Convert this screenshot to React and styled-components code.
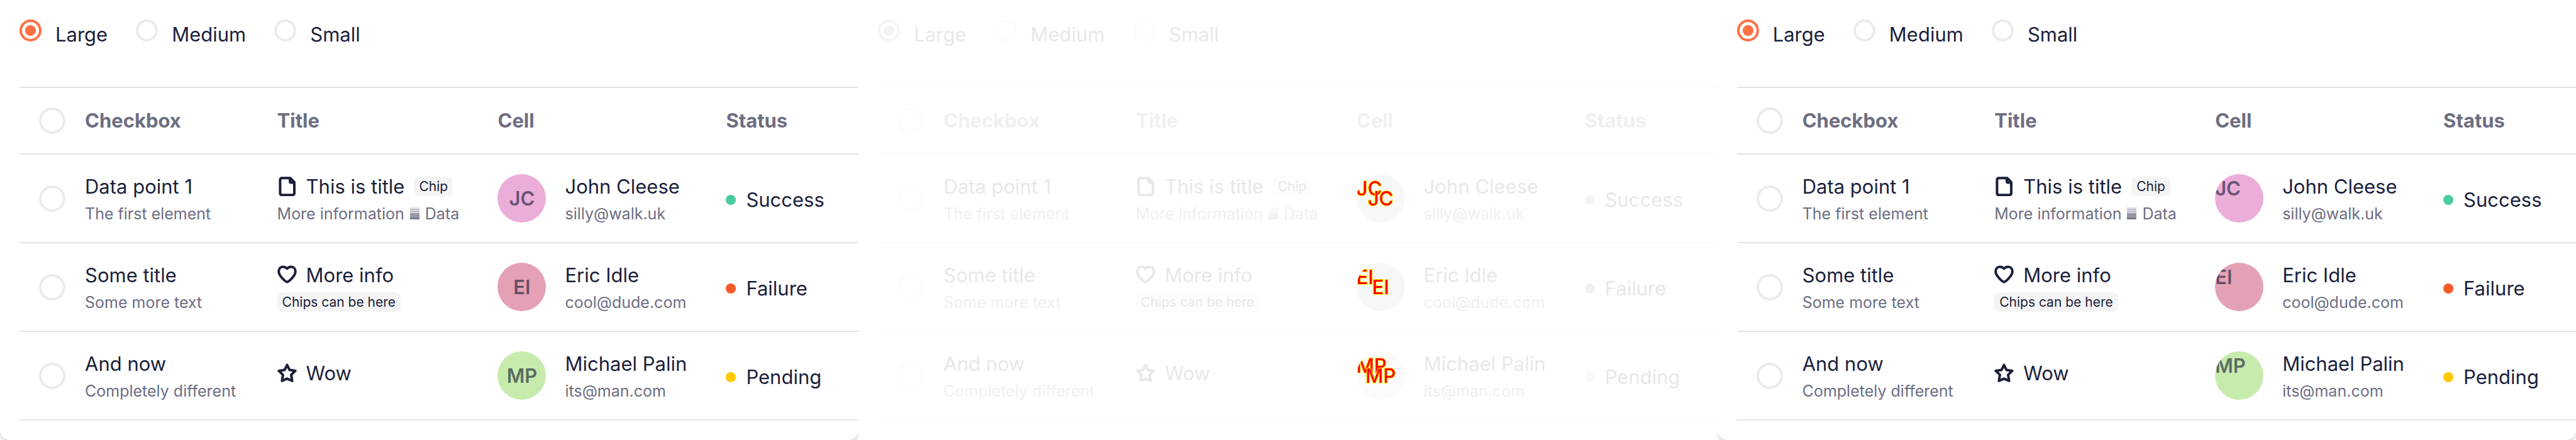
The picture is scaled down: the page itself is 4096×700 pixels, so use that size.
import React from "react";
import styled, { createGlobalStyle, ThemeProvider } from "styled-components";

const GlobalStyle = createGlobalStyle`
  *, *::before, *::after { box-sizing: border-box; }
  body { margin: 0; background: #fff; font-family: Inter, "Liberation Sans", sans-serif; }
`;

const regular = {
  text: "#1b1f3b",
  muted: "#6d6e82",
  line: "#e3e3e3",
  ring: "#ebebeb",
  accent: "#ff7043",
  chip: "#f4f4f4",
  shadow: "rgba(0, 0, 0, 0.22)",
  bars: "#6d6e82",
  avatars: ["#ebaed8", "#e4a1b5", "#c7ebac"],
  dots: ["#4bcb9b", "#f65a28", "#ffc800"],
};

const faded = {
  text: "#e8e8e8",
  muted: "#f0f0f0",
  line: "#fcfcfc",
  ring: "#fcfcfc",
  accent: "#f4f4f4",
  chip: "#fdfdfd",
  shadow: "rgba(0, 0, 0, 0.03)",
  bars: "#ececec",
  avatars: ["#f8f8f8", "#f7f7f7", "#fbfbfb"],
  dots: ["#f4f4f4", "#f1f1f1", "#f9f9f9"],
};

const Board = styled.main`
  display: grid;
  grid-template-columns: repeat(3, minmax(0, 1fr));
  min-height: 100vh;
`;

const Slot = styled.section`
  display: flex;
  overflow: hidden;
`;

const Panel = styled.div`
  flex: 1;
  min-width: 0;
  padding: 31px 0 24px 31px;
  background: #fff;
  border-radius: 0 0 16px 16px;
  box-shadow: 0 2px 8px ${(p) => p.theme.shadow};
  color: ${(p) => p.theme.text};
`;

const SizePicker = styled.div`
  display: flex;
  gap: 45px;
  margin-bottom: 59px;
`;

const SizeOption = styled.label`
  display: flex;
  align-items: flex-start;
  gap: 22px;
  font-size: 31px;
  line-height: 48px;
`;

const Radio = styled.input`
  appearance: none;
  width: 35px;
  height: 35px;
  margin: 0;
  padding: 5px;
  border: 4px solid ${(p) => p.theme.ring};
  border-radius: 50%;

  &:checked {
    border-color: ${(p) => p.theme.accent};
    background: radial-gradient(circle, ${(p) => p.theme.accent} 8px, transparent 9px);
  }
`;

const Table = styled.table`
  width: 100%;
  table-layout: fixed;
  border-collapse: separate;
  border-spacing: 0;
`;

const Col = styled.col`
  width: ${(p) => p.$width};
`;

const HeadCell = styled.th`
  height: 108px;
  padding: 0;
  border: solid ${(p) => p.theme.line};
  border-width: 2px 0;
  color: ${(p) => p.theme.muted};
  font-size: 31px;
  font-weight: 700;
  line-height: 48px;
  text-align: left;
`;

const Cell = styled.td`
  height: 141px;
  padding: 0;
  border-bottom: 2px solid ${(p) => p.theme.line};
  white-space: nowrap;
`;

const Tick = styled.input`
  appearance: none;
  display: block;
  width: 42px;
  height: 42px;
  margin: 0 0 0 31px;
  border: 4px solid ${(p) => p.theme.ring};
  border-radius: 50%;

  &:checked {
    background: ${(p) => p.theme.ring};
  }
`;

const Stack = styled.div`
  display: flex;
  flex-direction: column;
  padding-bottom: ${(p) => (p.$single ? 8 : 0)}px;
`;

const Primary = styled.div`
  display: flex;
  align-items: center;
  gap: 15px;
  font-size: 31px;
  line-height: 48px;
`;

const Secondary = styled.div`
  display: flex;
  align-items: center;
  gap: 9px;
  height: 38px;
  color: ${(p) => p.theme.muted};
  font-size: 25px;
  line-height: 38px;
`;

const Chip = styled.span`
  padding: 0 8px;
  border-radius: 8px;
  background: ${(p) => p.theme.chip};
  color: ${(p) => p.theme.text};
  font-size: 21px;
  line-height: 31px;
`;

const Icon = styled.svg`
  display: block;
  flex: none;
  width: 31px;
  height: 31px;
`;

const Bars = styled.svg`
  display: block;
  width: 15px;
  height: 19px;
  fill: ${(p) => p.theme.bars};
`;

const Person = styled.div`
  display: flex;
  align-items: center;
  gap: 30px;
`;

const Avatar = styled.div`
  position: relative;
  display: flex;
  align-items: ${(p) => (p.$centered ? "center" : "flex-start")};
  justify-content: ${(p) => (p.$centered ? "center" : "flex-start")};
  flex: none;
  width: 77px;
  height: 77px;
  border-radius: 50%;
  overflow: hidden;
  background: ${(p) => p.theme.avatars[p.$tone]};
`;

const Initials = styled.span`
  color: rgba(27, 31, 59, 0.65);
  font-size: 31px;
  font-weight: 600;
  line-height: 46px;
`;

const MarkedInitials = styled(Initials)`
  position: absolute;
  inset: 0;
  color: #f00;
  font-weight: 500;
  text-align: ${(p) => (p.$centered ? "center" : "left")};
  line-height: ${(p) => (p.$centered ? 77 : 46)}px;
  -webkit-text-stroke: 2px #ff0;
  paint-order: stroke fill;
`;

const Status = styled.div`
  display: flex;
  align-items: center;
  gap: 16px;
  padding-top: 4px;
  font-size: 31px;
  line-height: 48px;
`;

const Dot = styled.span`
  width: 16px;
  height: 16px;
  border-radius: 50%;
  background: ${(p) => p.theme.dots[p.$tone]};
`;

const shapes = {
  file: (
    <path d="M20.5 2.2H7.8Q4.4 2.2 4.4 5.6V25.9Q4.4 29.2 7.8 29.2H23.6Q27 29.2 27 25.9V8.8ZM20 3V7.4Q20 9.4 22 9.4H26.4" />
  ),
  heart: (
    <path d="M15.5 26.6C13.9 26.6 2.2 17.6 2.2 9.8C2.2 5.6 5 2.6 8.9 2.6C11.8 2.6 13.6 3.6 15.5 5.4C17.4 3.6 19.2 2.6 22.1 2.6C26 2.6 28.8 5.6 28.8 9.8C28.8 17.6 17.1 26.6 15.5 26.6Z" />
  ),
  star: (
    <path d="M15.5 2.6L19.3 10.4L28.7 11.9L22 18.4L23.6 28L15.5 24.4L7.4 28L9 18.4L2.3 11.9L11.7 10.4Z" />
  ),
};

function LineIcon({ name }) {
  return (
    <Icon
      viewBox="0 0 31 31"
      fill="none"
      stroke="currentColor"
      strokeWidth="4"
      strokeLinejoin="round"
      strokeLinecap="round"
      aria-hidden="true"
    >
      {shapes[name]}
    </Icon>
  );
}

function BarsMark() {
  return (
    <Bars viewBox="0 0 15 19" aria-hidden="true">
      <rect width="15" height="19" opacity="0.25" />
      <rect y="3" width="15" height="1" opacity="0.45" />
      <rect y="6" width="15" height="1" opacity="0.5" />
      <rect y="9" width="15" height="10" opacity="0.55" />
      <rect y="10" width="15" height="1" opacity="0.4" />
      <rect y="13" width="15" height="1" opacity="0.4" />
      <rect y="16" width="15" height="3" opacity="0.8" />
    </Bars>
  );
}

const rows = [
  {
    title: "Data point 1",
    note: "The first element",
    icon: "file",
    info: "This is title",
    chip: "Chip",
    detail: (
      <Secondary>
        <span>More information</span>
        <BarsMark />
        <span>Data</span>
      </Secondary>
    ),
    name: "John Cleese",
    initials: "JC",
    mail: "silly@walk.uk",
    status: "Success",
  },
  {
    title: "Some title",
    note: "Some more text",
    icon: "heart",
    info: "More info",
    detail: (
      <Secondary>
        <Chip>Chips can be here</Chip>
      </Secondary>
    ),
    name: "Eric Idle",
    initials: "EI",
    mail: "cool@dude.com",
    status: "Failure",
  },
  {
    title: "And now",
    note: "Completely different",
    icon: "star",
    info: "Wow",
    name: "Michael Palin",
    initials: "MP",
    mail: "its@man.com",
    status: "Pending",
  },
];

function UserAvatar({ tone, initials, mode }) {
  if (mode === "diff") {
    return (
      <Avatar $tone={tone}>
        <MarkedInitials>{initials}</MarkedInitials>
        <MarkedInitials $centered>{initials}</MarkedInitials>
      </Avatar>
    );
  }
  return (
    <Avatar $tone={tone} $centered={mode === "before"}>
      <Initials>{initials}</Initials>
    </Avatar>
  );
}

function DataPanel({ mode }) {
  return (
    <ThemeProvider theme={mode === "diff" ? faded : regular}>
      <Slot>
        <Panel>
          <SizePicker role="radiogroup" aria-label="Table size">
            {["Large", "Medium", "Small"].map((size) => (
              <SizeOption key={size}>
                <Radio type="radio" name={`size-${mode}`} defaultChecked={size === "Large"} />
                {size}
              </SizeOption>
            ))}
          </SizePicker>
          <Table>
            <colgroup>
              <Col $width="104px" />
              <Col $width="22.9%" />
              <Col $width="26.3%" />
              <Col $width="27.2%" />
              <Col $width="auto" />
            </colgroup>
            <thead>
              <tr>
                <HeadCell>
                  <Tick type="checkbox" aria-label="Select all rows" />
                </HeadCell>
                {["Checkbox", "Title", "Cell", "Status"].map((label) => (
                  <HeadCell key={label} scope="col">
                    {label}
                  </HeadCell>
                ))}
              </tr>
            </thead>
            <tbody>
              {rows.map((row, i) => (
                <tr key={row.title}>
                  <Cell>
                    <Tick type="checkbox" aria-label={`Select ${row.title}`} />
                  </Cell>
                  <Cell>
                    <Stack>
                      <Primary>{row.title}</Primary>
                      <Secondary>{row.note}</Secondary>
                    </Stack>
                  </Cell>
                  <Cell>
                    <Stack $single={!row.detail}>
                      <Primary>
                        <LineIcon name={row.icon} />
                        {row.info}
                        {row.chip && <Chip>{row.chip}</Chip>}
                      </Primary>
                      {row.detail}
                    </Stack>
                  </Cell>
                  <Cell>
                    <Person>
                      <UserAvatar tone={i} initials={row.initials} mode={mode} />
                      <Stack>
                        <Primary>{row.name}</Primary>
                        <Secondary>{row.mail}</Secondary>
                      </Stack>
                    </Person>
                  </Cell>
                  <Cell>
                    <Status>
                      <Dot $tone={i} />
                      {row.status}
                    </Status>
                  </Cell>
                </tr>
              ))}
            </tbody>
          </Table>
        </Panel>
      </Slot>
    </ThemeProvider>
  );
}

export default function App() {
  return (
    <>
      <GlobalStyle />
      <Board>
        <DataPanel mode="before" />
        <DataPanel mode="diff" />
        <DataPanel mode="after" />
      </Board>
    </>
  );
}
